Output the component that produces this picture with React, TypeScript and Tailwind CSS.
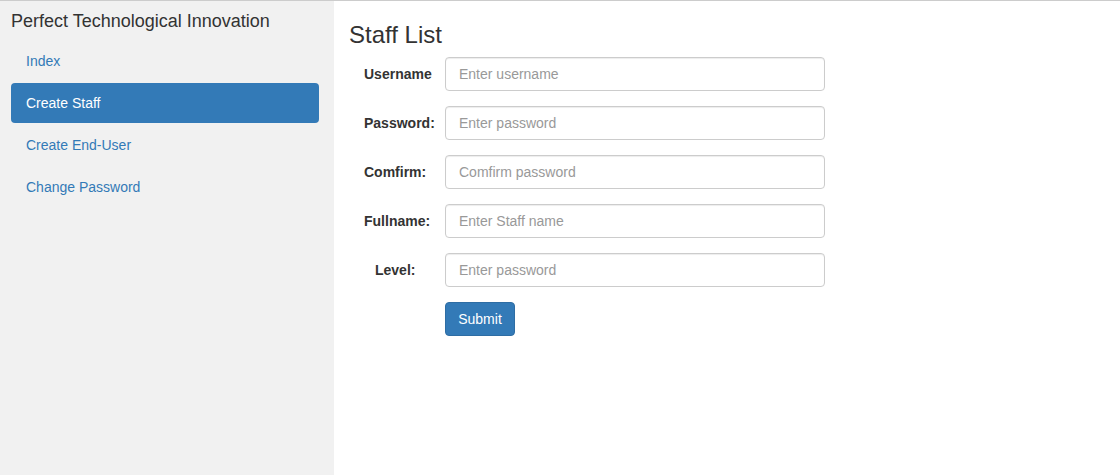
const navItems = [
  { label: 'Index', active: false },
  { label: 'Create Staff', active: true },
  { label: 'Create End-User', active: false },
  { label: 'Change Password', active: false },
]

const fields = [
  { label: 'Username', placeholder: 'Enter username', type: 'text', indent: false },
  { label: 'Password:', placeholder: 'Enter password', type: 'password', indent: false },
  { label: 'Comfirm:', placeholder: 'Comfirm password', type: 'password', indent: false },
  { label: 'Fullname:', placeholder: 'Enter Staff name', type: 'text', indent: false },
  { label: 'Level:', placeholder: 'Enter password', type: 'text', indent: true },
]

export default function App() {
  return (
    <div className="flex h-[475px] border-t border-[#cccccc] bg-white font-['Liberation_Sans',Arial,sans-serif] text-[14px] text-[#333333]">
      {/* Sidebar */}
      <aside className="w-[334px] shrink-0 bg-[#f1f1f1] pl-[11px] pr-[15px] pt-[10px]">
        <div className="text-[18px] leading-[20px] text-[#333333]">Perfect Technological Innovation</div>
        <ul className="mt-[10px] flex flex-col gap-[2px]">
          {navItems.map((item) => (
            <li key={item.label}>
              <a
                href="#"
                className={
                  item.active
                    ? 'block h-[40px] rounded-[4px] bg-[#337ab7] px-[15px] py-[10px] leading-[20px] text-white'
                    : 'block h-[40px] rounded-[4px] px-[15px] py-[10px] leading-[20px] text-[#337ab7]'
                }
              >
                {item.label}
              </a>
            </li>
          ))}
        </ul>
      </aside>

      {/* Main */}
      <main className="flex-1 pl-[15px]">
        <h2 className="mt-[21px] mb-[9px] text-[24px] leading-[26px] text-[#333333]">Staff List</h2>
        <form className="flex flex-col gap-[15px]" onSubmit={(e) => e.preventDefault()}>
          {fields.map((f) => (
            <div key={f.label} className="flex h-[34px] items-center">
              <label className={f.indent ? 'w-[96px] pl-[26px] font-bold' : 'w-[96px] pl-[15px] font-bold'}>
                {f.label}
              </label>
              <input
                type={f.type}
                placeholder={f.placeholder}
                className="h-[34px] w-[380px] rounded-[4px] border border-[#cccccc] px-[13px] text-[14px] text-[#555555] shadow-[inset_0_1px_1px_rgba(0,0,0,0.075)] outline-none placeholder:text-[#999999]"
              />
            </div>
          ))}
          <div className="flex pl-[96px]">
            <button
              type="submit"
              className="h-[34px] w-[70px] rounded-[4px] border border-[#2e6da4] bg-[#337ab7] text-[14px] text-white"
            >
              Submit
            </button>
          </div>
        </form>
      </main>
    </div>
  )
}
